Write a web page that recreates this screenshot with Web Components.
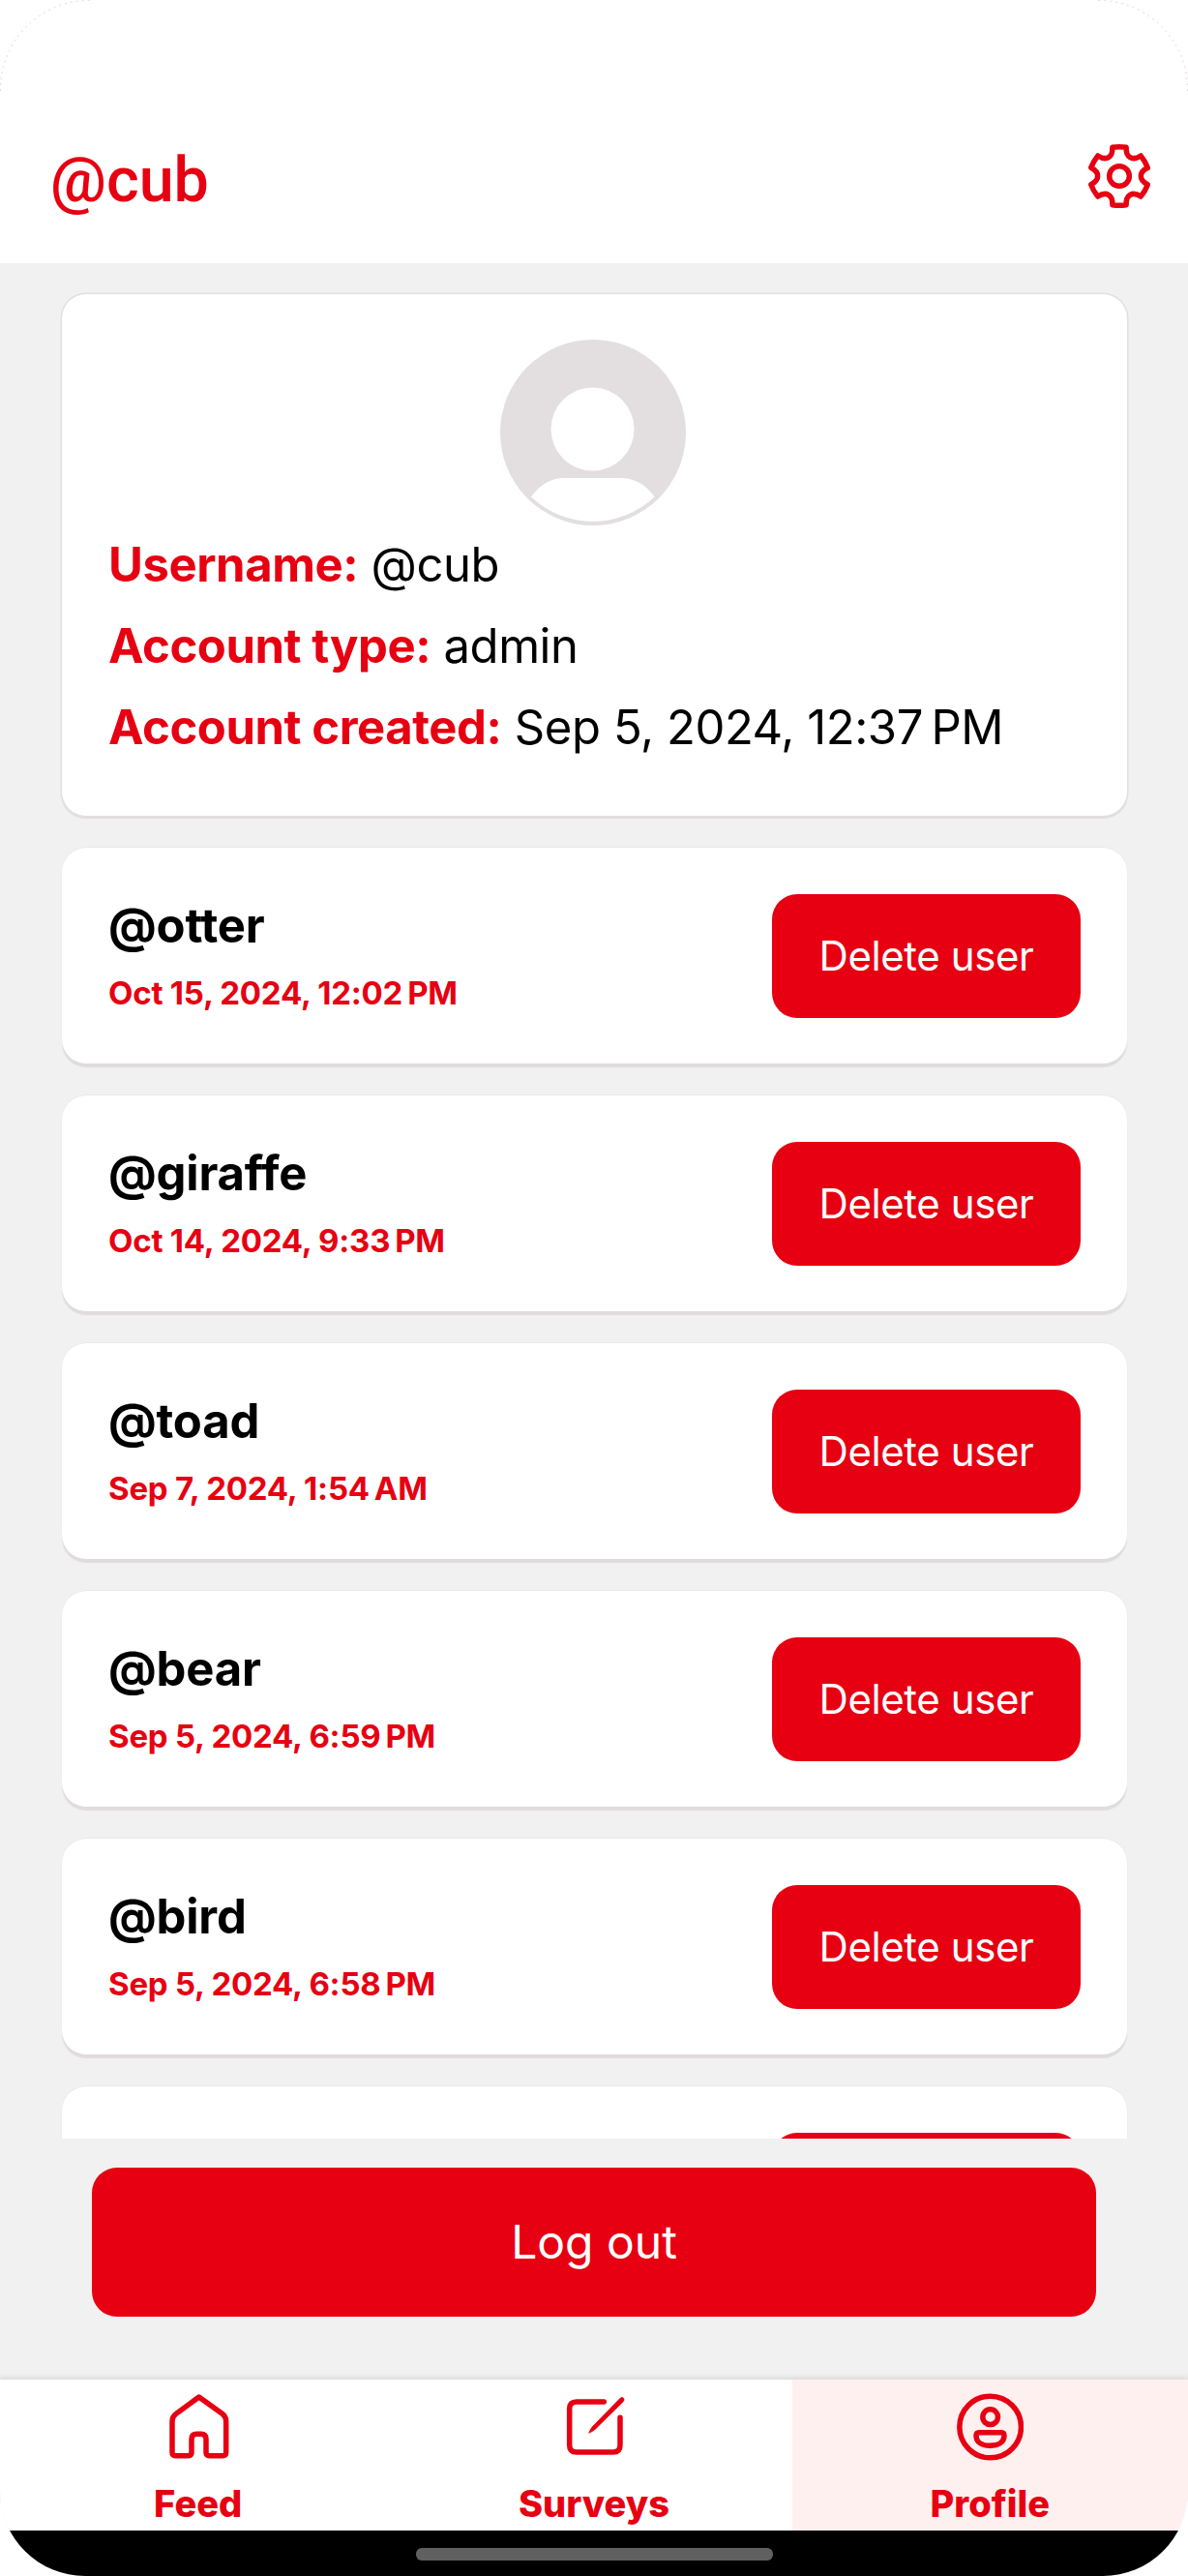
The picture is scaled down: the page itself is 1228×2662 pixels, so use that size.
<!DOCTYPE html>
<html lang="en">
<head>
<meta charset="utf-8">
<title>Profile</title>
<style>
  html, body { margin: 0; background: #fff; }
  body { font-family: Inter, "Liberation Sans", sans-serif; color: #000; }
</style>
</head>
<body>
<profile-screen></profile-screen>
<script>
const RED = '#e60012';

function define(name, html, after) {
  const tpl = document.createElement('template');
  tpl.innerHTML = html;
  customElements.define(name, class extends HTMLElement {
    constructor() {
      super();
      this.attachShadow({ mode: 'open' }).append(tpl.content.cloneNode(true));
    }
    connectedCallback() { if (after) after(this, this.shadowRoot); }
  });
}

/* Six-toothed gear outline: one notch and one tooth edge, turned six times. */
function gearPath() {
  const turn = (x, y, a) => {
    const c = Math.cos(a), s = Math.sin(a);
    return (x * c - y * s).toFixed(1) + ' ' + (x * s + y * c).toFixed(1);
  };
  let d = '';
  for (let i = 0; i < 6; i++) {
    const a = i * Math.PI / 3, p = (x, y) => turn(x, y, a);
    d += (i ? 'L' : 'M') + p(88, -26) +
      'C' + p(72, -18) + ' ' + p(67, -9) + ' ' + p(67, 0) +
      'C' + p(67, 9) + ' ' + p(72, 18) + ' ' + p(88, 26) +
      'Q' + p(80, 47) + ' ' + p(66.5, 63.2);
  }
  return d + 'Z';
}

const ICONS = {
  gear: { box: '-105 -105 210 210', body:
    `<path d="${gearPath()}"/><circle r="31"/>` },
  home: { box: '509 130 210 210', body:
    `<path d="M616 142L688 194Q700 203 700 217V314Q700 324 690 324H648Q638 324 638 314V273Q638 257 622 257H609Q593 257 593 273V314Q593 324 583 324H543Q533 324 533 314V217Q533 203 545 194Z"/>` },
  edit: { box: '507 130 210 210', body:
    `<path d="M643 157H558Q536 157 536 179V291Q536 313 558 313H671Q693 313 693 291V206" stroke-linecap="round"/><path d="M691 148Q698 139 704 146Q708 151 702 157L616 242Q609 249 596 254Q600 243 606 235Z" fill="${RED}" stroke-width="2"/>` },
  user: { box: '536 130 210 210', body:
    `<circle cx="643" cy="235" r="95.5"/><circle cx="643" cy="204" r="23.5"/><path d="M608 252H678Q686 252 686 262C686 283 667 293 642.500 293S599 283 599 262Q599 252 608 252Z"/>` }
};

define('line-icon', `<style>
  :host { display: block; width: 70px; height: 70px; }
  svg { display: block; }
</style>
<svg width="70" height="70" fill="none" stroke="${RED}" stroke-width="16.500" stroke-linejoin="round"></svg>`, (el, root) => {
  const icon = ICONS[el.getAttribute('name')], svg = root.querySelector('svg');
  svg.setAttribute('viewBox', icon.box);
  svg.innerHTML = icon.body;
});

define('app-header', `<style>
  :host { display: flex; box-sizing: border-box; height: 272px; padding: 99px 36px 0 52px;
    align-items: center; justify-content: space-between; background: #fff; color: ${RED}; }
  h1 { margin: 0; font: 500 64.600px/80px Roboto, sans-serif; }
  line-icon { margin-bottom: 7px; }
</style><h1><slot></slot></h1><line-icon name="gear"></line-icon>`);

define('user-avatar', `<style>
  :host { display: block; width: 192px; height: 192px; }
  svg { display: block; }
</style>
<svg width="192" height="192" viewBox="0 0 192 192">
  <circle cx="96" cy="96" r="96" fill="#e3dfe0"/>
  <circle cx="95.500" cy="92.500" r="43" fill="#fff"/>
  <path d="M32 162.500Q46 143 66 143H124Q146 143 159.500 162.500A92.500 92.500 0 0 1 32 162.500Z" fill="#fff"/>
</svg>`);

define('detail-line', `<style>
  :host { display: block; font-size: 49px; letter-spacing: -0.430px; line-height: 84px; white-space: nowrap; }
  b { color: ${RED}; font-weight: 700; }
</style><b></b> <slot></slot>`, (el, root) => {
  root.querySelector('b').textContent = el.getAttribute('label');
});

define('profile-card', `<style>
  :host { display: flex; flex: none; flex-direction: column; box-sizing: border-box; height: 539px;
    padding: 47px 48px 0; border-radius: 25px; background: #fff;
    box-shadow: 0 0 0 1.500px #e3dfe0, 0 2.500px 1px 0.500px #e0dcdd; }
  user-avatar { align-self: center; margin: 0 3px -1px 0; }
</style><user-avatar></user-avatar><slot></slot>`);

define('red-button', `<style>
  :host { display: flex; align-items: center; justify-content: center; border-radius: 26px;
    background: ${RED}; color: #fff; }
</style><slot></slot>`);

define('user-card', `<style>
  :host { display: flex; flex: none; box-sizing: border-box; height: 223px; padding: 44px 48px 0;
    justify-content: space-between; align-items: flex-start; border-radius: 25px; background: #fff;
    box-shadow: 0 -0.500px 0 0 #e3dfe0, 0 3.500px 1px 0 #e0dcdd; }
  .who { white-space: nowrap; }
  .name { font-size: 49px; letter-spacing: -0.200px; line-height: 73px; font-weight: 700; }
  .date { font-size: 33px; letter-spacing: -0.230px; line-height: 67px; font-weight: 700; color: ${RED}; }
  red-button { box-sizing: border-box; width: 319px; height: 128px; margin-top: 4px; padding-bottom: 1px;
    font-size: 42px; letter-spacing: -0.400px; }
</style>
<div class="who"><div class="name"><slot></slot></div><div class="date"></div></div>
<red-button></red-button>`, (el, root) => {
  const date = el.getAttribute('date');
  if (date) {
    root.querySelector('.date').textContent = date;
    root.querySelector('red-button').textContent = 'Delete user';
  }
});

define('nav-tab', `<style>
  :host { display: flex; flex: 1 1 0; flex-direction: column; align-items: center; gap: 20px;
    padding-top: 14px; box-sizing: border-box; color: ${RED}; font-size: 38px; font-weight: 800;
    line-height: 48px; }
  :host([active]) { background: #fff0f0; }
</style><slot name="icon"></slot><div><slot></slot></div>`);

define('tab-bar', `<style>
  :host { display: flex; flex: none; height: 156px; background: #fff; box-shadow: 0 -1px 5px 1px #d8d8d8; }
</style><slot></slot>`);

define('home-strip', `<style>
  :host { display: flex; flex: none; position: relative; height: 47px; justify-content: center; background: #000; }
  i { width: 369px; height: 13px; margin-top: 18px; border-radius: 6px; background: #606060; }
</style><i></i>`);

define('corner-trace', `<style>
  :host { position: absolute; inset: 0 0 auto 0; }
  svg { display: block; }
</style>
<svg width="1228" height="100" fill="none" stroke="#ddd8da" stroke-width="1" stroke-dasharray="2 4">
  <path d="M0.500 94A92 92 0 0 1 96 0.500M1227.500 94A92 92 0 0 0 1132 0.500"/>
</svg>`);

define('profile-screen', `<style>
  :host { display: flex; flex-direction: column; position: relative; width: 1228px; height: 2662px;
    border-radius: 88px; overflow: hidden; background: #f1f1f1; }
  app-header { flex: none; }
  .list { display: flex; flex-direction: column; gap: 33px; box-sizing: border-box; flex: none;
    height: 1938px; padding: 32px 63px 0 64px; overflow: hidden; }
  .footer { display: flex; flex: none; box-sizing: border-box; height: 249px; padding: 30px 95px 0; }
  .footer red-button { flex: 1; box-sizing: border-box; height: 154px; padding-bottom: 2px; font-size: 48px; }
</style>
<app-header>@cub</app-header>
<div class="list">
  <profile-card>
    <detail-line label="Username:">@cub</detail-line>
    <detail-line label="Account type:">admin</detail-line>
    <detail-line label="Account created:">Sep 5, 2024, 12:37&#8239;PM</detail-line>
  </profile-card>
  <user-card date="Oct 15, 2024, 12:02&#8239;PM">@otter</user-card>
  <user-card date="Oct 14, 2024, 9:33&#8239;PM">@giraffe</user-card>
  <user-card date="Sep 7, 2024, 1:54&#8239;AM">@toad</user-card>
  <user-card date="Sep 5, 2024, 6:59&#8239;PM">@bear</user-card>
  <user-card date="Sep 5, 2024, 6:58&#8239;PM">@bird</user-card>
  <user-card></user-card>
</div>
<div class="footer"><red-button>Log out</red-button></div>
<tab-bar>
  <nav-tab><line-icon slot="icon" name="home"></line-icon>Feed</nav-tab>
  <nav-tab><line-icon slot="icon" name="edit"></line-icon>Surveys</nav-tab>
  <nav-tab active><line-icon slot="icon" name="user"></line-icon>Profile</nav-tab>
</tab-bar>
<home-strip></home-strip>
<corner-trace></corner-trace>`);
</script>
</body>
</html>
